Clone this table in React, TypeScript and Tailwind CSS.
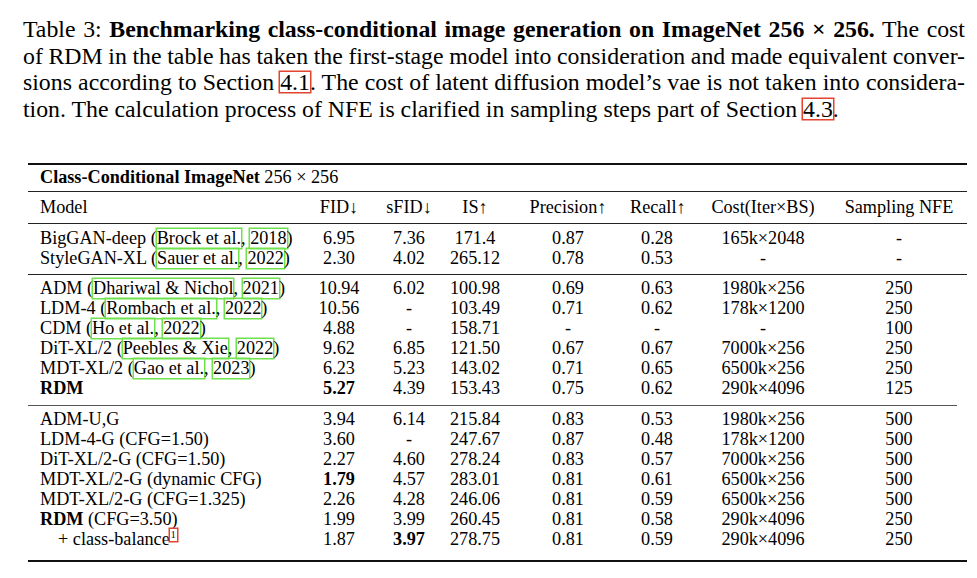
import type { ReactNode } from "react"

const serif = { fontFamily: '"Liberation Serif", "Times New Roman", serif' }

function RefBox({ children }: { children: ReactNode }) {
  return (
    <span className="inline-block leading-[20px] ring-[1.5px] ring-[#e4432d]">{children}</span>
  )
}

function Cite({ children }: { children: ReactNode }) {
  return (
    <span className="inline-block leading-[19px] ring-[1.5px] ring-[#6ee24c]">{children}</span>
  )
}

function Model({ name, who, year }: { name: string; who?: string; year?: string }) {
  if (!who) return <span>{name}</span>
  return (
    <span>
      {name} (<Cite>{who}</Cite>, <Cite>{year}</Cite>)
    </span>
  )
}

type Row = {
  model: ReactNode
  cells: (string | { b: string })[]
}

const group1: Row[] = [
  { model: <Model name="BigGAN-deep" who="Brock et al." year="2018" />, cells: ["6.95", "7.36", "171.4", "0.87", "0.28", "165k×2048", "-"] },
  { model: <Model name="StyleGAN-XL" who="Sauer et al." year="2022" />, cells: ["2.30", "4.02", "265.12", "0.78", "0.53", "-", "-"] },
]

const group2: Row[] = [
  { model: <Model name="ADM" who="Dhariwal & Nichol" year="2021" />, cells: ["10.94", "6.02", "100.98", "0.69", "0.63", "1980k×256", "250"] },
  { model: <Model name="LDM-4" who="Rombach et al." year="2022" />, cells: ["10.56", "-", "103.49", "0.71", "0.62", "178k×1200", "250"] },
  { model: <Model name="CDM" who="Ho et al." year="2022" />, cells: ["4.88", "-", "158.71", "-", "-", "-", "100"] },
  { model: <Model name="DiT-XL/2" who="Peebles & Xie" year="2022" />, cells: ["9.62", "6.85", "121.50", "0.67", "0.67", "7000k×256", "250"] },
  { model: <Model name="MDT-XL/2" who="Gao et al." year="2023" />, cells: ["6.23", "5.23", "143.02", "0.71", "0.65", "6500k×256", "250"] },
  { model: <b>RDM</b>, cells: [{ b: "5.27" }, "4.39", "153.43", "0.75", "0.62", "290k×4096", "125"] },
]

const group3: Row[] = [
  { model: "ADM-U,G", cells: ["3.94", "6.14", "215.84", "0.83", "0.53", "1980k×256", "500"] },
  { model: "LDM-4-G (CFG=1.50)", cells: ["3.60", "-", "247.67", "0.87", "0.48", "178k×1200", "500"] },
  { model: "DiT-XL/2-G (CFG=1.50)", cells: ["2.27", "4.60", "278.24", "0.83", "0.57", "7000k×256", "500"] },
  { model: "MDT-XL/2-G (dynamic CFG)", cells: [{ b: "1.79" }, "4.57", "283.01", "0.81", "0.61", "6500k×256", "500"] },
  { model: "MDT-XL/2-G (CFG=1.325)", cells: ["2.26", "4.28", "246.06", "0.81", "0.59", "6500k×256", "500"] },
  { model: <span><b>RDM</b> (CFG=3.50)</span>, cells: ["1.99", "3.99", "260.45", "0.81", "0.58", "290k×4096", "250"] },
  {
    model: (
      <span className="pl-[18px]">
        + class-balance
        <span className="relative -top-[7px] inline-block text-[10px] leading-[12px] px-[1px] ring-[1.5px] ring-[#e4432d]">1</span>
      </span>
    ),
    cells: ["1.87", { b: "3.97" }, "278.75", "0.81", "0.59", "290k×4096", "250"],
  },
]

const cols = "grid grid-cols-[276px_70px_70px_62px_124px_54px_158px_114px]"

function TableRow({ row }: { row: Row }) {
  return (
    <div className={`${cols} h-[20px] items-center leading-[20px]`}>
      <div className="pl-[12px] whitespace-nowrap">{row.model}</div>
      {row.cells.map((c, i) => (
        <div key={i} className="text-center whitespace-nowrap">
          {typeof c === "string" ? c : <b>{c.b}</b>}
        </div>
      ))}
    </div>
  )
}

const justLine = "text-justify [text-align-last:justify] whitespace-nowrap [word-spacing:-4px]"

export default function App() {
  return (
    <div className="w-[977px] h-[578px] bg-white text-black overflow-hidden" style={serif}>
      {/* caption */}
      <div className="pt-[16px] pl-[23px] w-[965px] text-[23.8px] leading-[26.7px]">
        <div className={justLine}>
          Table 3: <b>Benchmarking class-conditional image generation on ImageNet 256 × 256.</b> The cost
        </div>
        <div className={justLine}>
          of RDM in the table has taken the first-stage model into consideration and made equivalent conver-
        </div>
        <div className={justLine}>
          sions according to Section <RefBox>4.1</RefBox>. The cost of latent diffusion model’s vae is not taken into considera-
        </div>
        <div>
          tion. The calculation process of NFE is clarified in sampling steps part of Section <RefBox>4.3</RefBox>.
        </div>
      </div>

      {/* table */}
      <div className="mt-[40px] ml-[28px] w-[939px] text-[18.2px]">
        <div className="h-[2px] bg-[#111]" />
        <div className="h-[26px] flex items-center pl-[12px]">
          <b>Class-Conditional ImageNet</b>&nbsp;256 × 256
        </div>
        <div className="h-px bg-[#222]" />
        <div className={`${cols} h-[31px] items-center`}>
          <div className="pl-[12px]">Model</div>
          <div className="text-center">FID↓</div>
          <div className="text-center">sFID↓</div>
          <div className="text-center">IS↑</div>
          <div className="text-center">Precision↑</div>
          <div className="text-center">Recall↑</div>
          <div className="text-center">Cost(Iter×BS)</div>
          <div className="text-center">Sampling NFE</div>
        </div>
        <div className="h-px bg-[#222]" />
        <div className="pt-[4px] pb-[6px]">
          {group1.map((r, i) => (
            <TableRow key={i} row={r} />
          ))}
        </div>
        <div className="h-px bg-[#222]" />
        <div className="pt-[3px] pb-[7px]">
          {group2.map((r, i) => (
            <TableRow key={i} row={r} />
          ))}
        </div>
        <div className="h-px bg-[#555] mr-[10px]" />
        <div className="pt-[3px] pb-[11px]">
          {group3.map((r, i) => (
            <TableRow key={i} row={r} />
          ))}
        </div>
        <div className="h-[2px] bg-[#111]" />
      </div>
    </div>
  )
}
